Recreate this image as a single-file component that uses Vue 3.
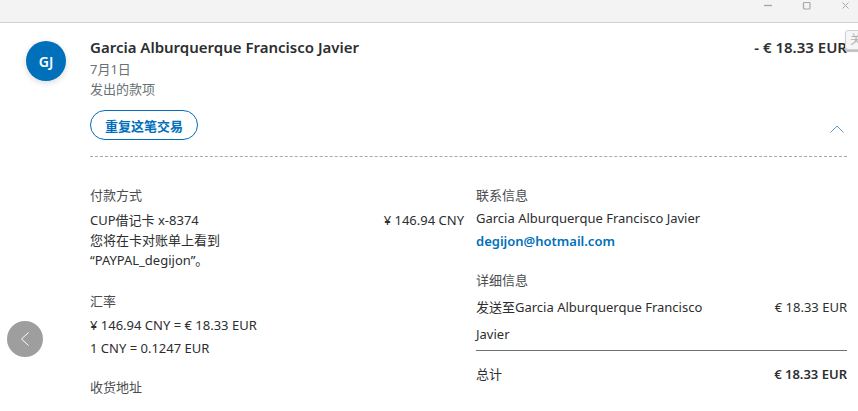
<script setup>
const windowButtons = ['min', 'max', 'close']
</script>

<template>
  <div class="window">
    <div class="titlebar">
      <svg v-for="b in windowButtons" :key="b" class="win-btn" width="10" height="10" viewBox="0 0 10 10" fill="none" stroke="#a8a8a8">
        <path v-if="b === 'min'" d="M1 3.5h8" stroke-width="1.4" />
        <rect v-else-if="b === 'max'" x="1.5" y="0.5" width="6.5" height="6.5" rx="1" stroke-width="1.2" />
        <path v-else d="M1.5 0.5l6 6M7.5 0.5l-6 6" stroke-width="1" />
      </svg>
    </div>

    <div class="page">
      <div class="avatar-col">
        <div class="avatar">GJ</div>
        <button class="back" aria-label="back">
          <svg width="10" height="16" viewBox="0 0 10 16" fill="none" stroke="#fff" stroke-width="1">
            <path d="M8.5 1.5L1.5 8l7 6.5" />
          </svg>
        </button>
      </div>

      <div class="main">
        <div class="head">
          <div class="head-row">
            <div class="name">Garcia Alburquerque Francisco Javier</div>
            <div class="amount">- € 18.33 EUR</div>
          </div>
          <div class="sub first">7月1日</div>
          <div class="sub">发出的款项</div>
          <div class="action-row">
            <button class="repeat">重复这笔交易</button>
            <svg class="chevron" width="14" height="8" viewBox="0 0 14 8" fill="none" stroke="#5a9fd8" stroke-width="1">
              <path d="M0.5 7.5L7 1l6.5 6.5" />
            </svg>
          </div>
        </div>

        <div class="details">
          <div class="col left">
            <div class="label">付款方式</div>
            <div class="line-row pay">
              <span>CUP借记卡 x-8374</span>
              <span>¥ 146.94 CNY</span>
            </div>
            <div class="note">您将在卡对账单上看到</div>
            <div class="note">“PAYPAL_degijon”。</div>

            <div class="label rate-label">汇率</div>
            <div class="rate first-rate">¥ 146.94 CNY = € 18.33 EUR</div>
            <div class="rate">1 CNY = 0.1247 EUR</div>

            <div class="label ship-label">收货地址</div>
          </div>

          <div class="col right">
            <div class="label">联系信息</div>
            <div class="contact">Garcia Alburquerque Francisco Javier</div>
            <a class="mail">degijon@hotmail.com</a>

            <div class="label detail-label">详细信息</div>
            <div class="line-row sent">
              <span class="sent-name">发送至Garcia Alburquerque Francisco Javier</span>
              <span>€ 18.33 EUR</span>
            </div>
            <div class="line-row total">
              <span>总计</span>
              <strong>€ 18.33 EUR</strong>
            </div>
          </div>
        </div>
      </div>
    </div>

    <div class="tip">关</div>
  </div>
</template>

<style>
html, body {
  margin: 0;
  background: #fff;
  overflow: hidden;
}
</style>

<style scoped>
.window {
  position: relative;
  width: 858px;
  height: 411px;
  overflow: hidden;
  font-family: "Noto Sans", "Noto Sans CJK SC", sans-serif;
  font-size: 13px;
  color: #2c2e2f;
}

.titlebar {
  height: 22px;
  background: #f3f3f3;
  border-bottom: 1px solid #cdd3d8;
  display: flex;
  justify-content: flex-end;
  align-items: flex-start;
  gap: 29px;
  padding: 2px 7px 0 0;
  box-sizing: content-box;
  height: 20px;
}

.page {
  display: flex;
  height: 388px;
}

.avatar-col {
  width: 90px;
  flex: none;
  position: relative;
}

.avatar {
  position: absolute;
  left: 26px;
  top: 18px;
  width: 40px;
  height: 40px;
  border-radius: 50%;
  background: #0070ba;
  color: #fff;
  font-size: 14px;
  font-weight: 600;
  display: flex;
  align-items: center;
  justify-content: center;
  box-shadow: 0 2px 6px rgba(0, 0, 0, 0.15);
}

.back {
  position: absolute;
  left: 7px;
  top: 298px;
  width: 36px;
  height: 36px;
  padding: 0;
  border: none;
  border-radius: 50%;
  background: #9e9e9e;
  display: flex;
  align-items: center;
  justify-content: center;
}

.main {
  width: 757px;
  flex: none;
  overflow: hidden;
}

.head {
  height: 134px;
  border-bottom: 1px dashed #a9a9a9;
  box-sizing: border-box;
  padding-top: 14px;
}

.head-row {
  display: flex;
  justify-content: space-between;
  align-items: center;
  height: 20px;
}

.name,
.amount {
  font-size: 15px;
  font-weight: 600;
}

.sub {
  color: #687173;
  height: 20px;
  line-height: 20px;
}

.sub.first {
  margin-top: 2px;
}

.action-row {
  display: flex;
  justify-content: space-between;
  align-items: center;
  margin-top: 11px;
  padding-right: 3px;
}

.repeat {
  width: 108px;
  height: 30px;
  padding: 0;
  border: 1px solid #0070ba;
  border-radius: 15px;
  background: #fff;
  color: #0070ba;
  font: 600 13px "Noto Sans", "Noto Sans CJK SC", sans-serif;
}

.chevron {
  margin-top: 7px;
}

.details {
  display: flex;
  gap: 12px;
  padding-top: 28px;
}

.col {
  flex: none;
}

.left {
  width: 374px;
}

.right {
  width: 371px;
}

.label {
  color: #4a4d4f;
  height: 20px;
  line-height: 20px;
}

.line-row {
  display: flex;
  justify-content: space-between;
}

.pay {
  margin-top: 5px;
  line-height: 20px;
}

.note {
  height: 20px;
  line-height: 20px;
}

.rate-label {
  margin-top: 21px;
}

.rate {
  height: 23px;
  line-height: 23px;
}

.first-rate {
  margin-top: 3px;
}

.ship-label {
  margin-top: 17px;
}

.contact {
  margin-top: 3px;
  height: 20px;
  line-height: 20px;
}

.mail {
  display: block;
  margin-top: 3px;
  height: 20px;
  line-height: 20px;
  color: #0070ba;
  font-weight: 600;
}

.detail-label {
  margin-top: 19px;
}

.sent {
  margin-top: 4px;
  line-height: 27px;
  padding-bottom: 2px;
  border-bottom: 1px solid #6c7378;
}

.sent-name {
  width: 250px;
}

.total {
  margin-top: 13px;
  line-height: 20px;
}

.total strong {
  font-weight: 600;
}

.tip {
  position: absolute;
  left: 845px;
  top: 30px;
  width: 20px;
  height: 20px;
  box-sizing: border-box;
  border: 1px solid #d0d0d0;
  border-radius: 3px;
  background: #f6f6f6;
  color: #b0b0b0;
  font-size: 12px;
  line-height: 18px;
  padding-left: 4px;
  box-shadow: 0 2px 1px rgba(0, 0, 0, 0.25);
}
</style>
